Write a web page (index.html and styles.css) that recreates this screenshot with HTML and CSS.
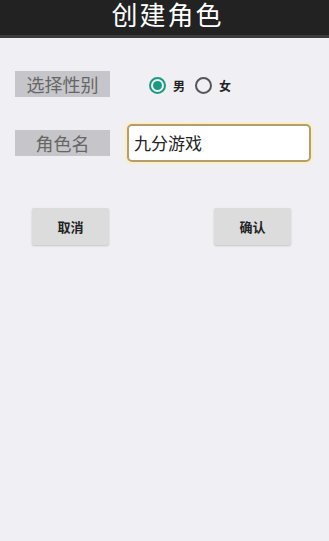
FILE: index.html
```html
<!DOCTYPE html>
<html lang="zh">
<head>
<meta charset="utf-8">
<title>创建角色</title>
<link rel="stylesheet" href="styles.css">
</head>
<body>
<header class="topbar"><h1 class="title">创建角色</h1></header>
<main class="content">
  <div class="row row-gender">
    <span class="label">选择性别</span>
    <div class="radios">
      <span class="radio checked"></span><span class="radio-text">男</span>
      <span class="radio"></span><span class="radio-text">女</span>
    </div>
  </div>
  <div class="row row-name">
    <span class="label">角色名</span>
    <div class="input">九分游戏</div>
  </div>
  <div class="buttons">
    <button class="btn">取消</button>
    <button class="btn">确认</button>
  </div>
</main>
</body>
</html>
```
FILE: styles.css
```css
html, body {
  margin: 0;
  padding: 0;
}
body {
  width: 329px;
  height: 541px;
  background: #efeff4;
  font-family: "Noto Sans CJK SC", "Noto Sans", sans-serif;
  overflow: hidden;
}
.topbar {
  height: 35px;
  background: #222222;
  border-bottom: 3px solid #3b3b3b;
  display: flex;
  justify-content: center;
  align-items: flex-start;
}
.title {
  margin: 0;
  margin-left: 6px;
  font-family: "Liberation Sans", "Noto Sans CJK SC", sans-serif;
  font-size: 26px;
  font-weight: 400;
  line-height: 32px;
  color: #ffffff;
  letter-spacing: 2px;
}
.content {
  padding: 33px 0 0 15px;
}
.row {
  display: flex;
  align-items: center;
}
.label {
  width: 95px;
  height: 26px;
  background: #c6c6ca;
  color: #666666;
  font-size: 18px;
  line-height: 26px;
  text-align: center;
}
.radios {
  display: flex;
  align-items: center;
  margin-left: 39px;
  padding-top: 2px;
}
.radio {
  box-sizing: border-box;
  width: 17px;
  height: 17px;
  border: 2px solid #555555;
  border-radius: 50%;
  display: flex;
  align-items: center;
  justify-content: center;
}
.radio.checked {
  border-color: #1b9a82;
}
.radio.checked::after {
  content: "";
  width: 9px;
  height: 9px;
  border-radius: 50%;
  background: #1b9a82;
}
.radio-text {
  font-size: 12px;
  font-weight: 700;
  color: #222222;
  margin: 0 10px 0 7px;
}
.row-name {
  margin-top: 27px;
}
.input {
  box-sizing: border-box;
  margin-left: 17px;
  width: 184px;
  height: 38px;
  background: #ffffff;
  border: 2px solid #b49d6e;
  border-radius: 5px;
  box-shadow: 0 0 0 2px #fbedc4;
  padding-left: 5px;
  font-size: 17px;
  line-height: 34px;
  color: #222222;
}
.buttons {
  display: flex;
  margin-top: 46px;
  padding-left: 17px;
  gap: 105px;
}
.btn {
  width: 77px;
  height: 37px;
  border: none;
  border-radius: 2px;
  background: #dcdcdc;
  box-shadow: 0 1px 2px rgba(0,0,0,0.18);
  font-family: "Noto Sans CJK SC", sans-serif;
  font-size: 13px;
  font-weight: 700;
  color: #222222;
  padding: 0;
}
```
